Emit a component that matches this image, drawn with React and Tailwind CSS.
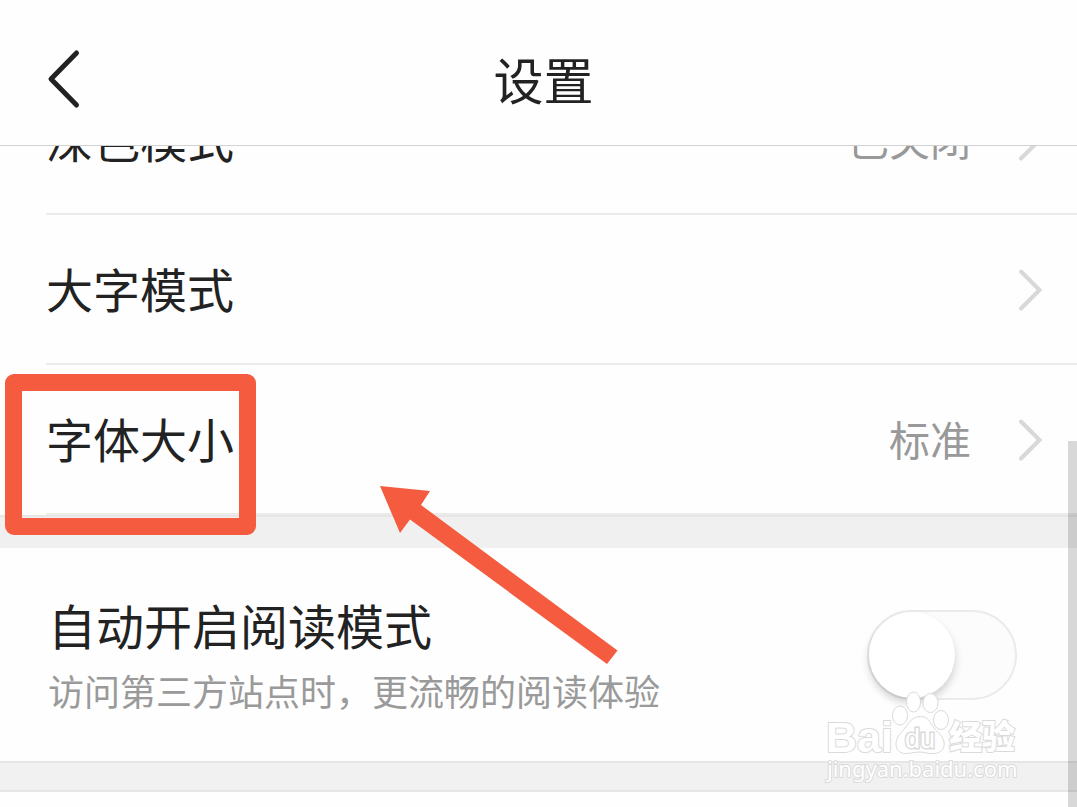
import React from "react";

function Chevron() {
  return (
    <svg width="28" height="46" viewBox="0 0 28 46" fill="none" className="shrink-0" aria-hidden="true">
      <path d="M4 5.5 L22.5 24 L4 42.5" stroke="#d8d8d8" strokeWidth="4" strokeLinecap="round" strokeLinejoin="miter" />
    </svg>
  );
}

function SettingRow({ label, value }) {
  return (
    <button
      type="button"
      className="ml-[46px] flex h-[150px] shrink-0 items-center border-b-2 border-[#ebebeb] pr-8 text-left"
    >
      <span className="flex-1 pb-0.5 text-[47px] leading-[72px] text-[#222222]">{label}</span>
      {value && <span className="mr-[46px] pb-0.5 text-[41px] leading-[60px] text-[#999999]">{value}</span>}
      <Chevron />
    </button>
  );
}

function Watermark() {
  return (
    <svg
      width="200"
      height="100"
      viewBox="0 0 200 100"
      className="pointer-events-none absolute right-[55px] top-[688px]"
      fill="#ffffff"
      stroke="#dadada"
      strokeWidth="1"
      aria-hidden="true"
    >
      <text
        x="4"
        y="64"
        fontSize="43"
        fontWeight="700"
        fontFamily="Liberation Sans, sans-serif"
        strokeWidth="2"
        strokeLinejoin="round"
        paintOrder="stroke"
      >
        Bai
      </text>
      <ellipse cx="78" cy="27.5" rx="7.5" ry="9.5" />
      <ellipse cx="91.5" cy="14" rx="7" ry="10" />
      <ellipse cx="108.5" cy="15" rx="7.5" ry="9.5" />
      <ellipse cx="119" cy="32" rx="7.5" ry="9.5" />
      <path d="M98.5 28.5 C91 28.5 87 34 83 40 C79 45 74 49 74 56 C74 63 79 66 85 65.5 C90 65 94 64 98 64 C102 64 107 66 112 65.5 C119 65 123 61 122 54 C121 48 116 45 112 40 C108 34 106 28.5 98.5 28.5 Z" />
      <text x="83" y="60" fontSize="27" fontFamily="Liberation Sans, sans-serif" strokeWidth="3" paintOrder="stroke">
        du
      </text>
      <text x="127" y="61" fontSize="33" fontWeight="900" fontFamily="Noto Sans CJK SC, sans-serif" strokeWidth="2" paintOrder="stroke">
        经验
      </text>
      <text x="5" y="89" fontSize="22" fontFamily="Noto Sans, sans-serif" strokeWidth="2" paintOrder="stroke">
        jingyan.baidu.com
      </text>
    </svg>
  );
}

export default function App() {
  return (
    <div className="relative flex min-h-screen flex-col overflow-hidden bg-[#fefefe] font-['Noto_Sans_CJK_SC',sans-serif]">
      <header className="grid h-[146px] shrink-0 grid-cols-[1fr_auto_1fr] items-center border-b border-[#d2d2d2] pl-[46px] pr-9 pt-3">
        <button type="button" aria-label="返回" className="justify-self-start">
          <svg width="36" height="60" viewBox="0 0 36 60" fill="none" aria-hidden="true">
            <path d="M30.5 4 L5 30 L30.5 56" stroke="#222222" strokeWidth="5" strokeLinecap="round" strokeLinejoin="round" />
          </svg>
        </button>
        <h1 className="pb-0.5 text-[50px] leading-[72px] text-[#222222]">设置</h1>
      </header>

      <main className="flex flex-1 flex-col">
        <section className="flex flex-col">
          <div className="flex h-[69px] flex-col justify-end overflow-hidden">
            <SettingRow label="深色模式" value="已关闭" />
          </div>
          <SettingRow label="大字模式" />
          <SettingRow label="字体大小" value="标准" />
        </section>

        <div className="h-[33px] border-t-2 border-[#e6e6e6] bg-[#f1f0f1]" />

        <section className="flex h-[213px] items-center justify-between pl-12 pr-[60px]">
          <label htmlFor="auto-reader" className="flex flex-col pb-0.5">
            <span className="text-[48px] leading-[72px] text-[#222222]">自动开启阅读模式</span>
            <span className="text-[36px] leading-[60px] text-[#9a9a9a]">访问第三方站点时，更流畅的阅读体验</span>
          </label>
          <input
            id="auto-reader"
            type="checkbox"
            role="switch"
            className="h-[90px] w-[150px] shrink-0 appearance-none rounded-full border-2 border-[#ebebeb] bg-[#fcfcfc] before:block before:size-[86px] before:rounded-full before:bg-white before:shadow-[0_5px_8px_rgba(0,0,0,0.18)] checked:bg-[#4e6ef2] checked:before:ml-[60px]"
          />
        </section>

        <div className="h-[31px] border-y-2 border-[#e6e6e6] bg-[#f1f1f1]" />
      </main>

      <div className="pointer-events-none absolute left-[5px] top-[374px] h-[161px] w-[251px] rounded-[9px] border-[17px] border-[#f45b3f]" />
      <svg
        width="240"
        height="180"
        viewBox="0 0 240 180"
        className="pointer-events-none absolute left-[379px] top-[485px]"
        aria-hidden="true"
      >
        <path d="M1 1 L51 6 L42 20 L238.5 165.5 L228 179 L31 34.5 L21 48 Z" fill="#f45b3f" />
      </svg>
      <Watermark />
      <div className="pointer-events-none absolute bottom-0 right-0 top-[441px] w-[9px] bg-black/15" />
    </div>
  );
}
